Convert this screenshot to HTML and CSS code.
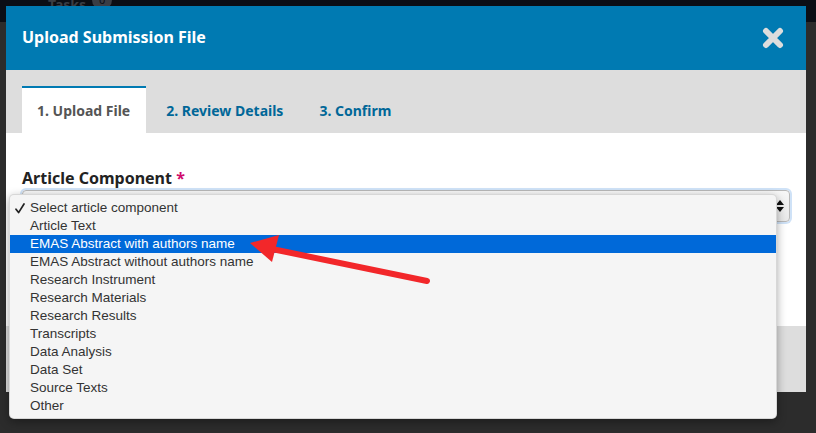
FILE: index.html
```html
<!DOCTYPE html>
<html lang="en">
<head>
<meta charset="utf-8">
<title>Upload Submission File</title>
<link rel="stylesheet" href="styles.css">
</head>
<body>
<div class="page">
  <header class="topbar">
    <span class="tasks">Tasks</span>
    <span class="tasks-badge">0</span>
  </header>
  <div class="page-body"></div>
</div>

<div class="modal" role="dialog" aria-label="Upload Submission File">
  <div class="modal-header">
    <h2 class="modal-title">Upload Submission File</h2>
    <button class="modal-close" aria-label="Close">
      <svg width="22" height="22" viewBox="0 0 22 22">
        <path d="M4 4 L18 18 M18 4 L4 18" stroke="#dddddd" stroke-width="6" stroke-linecap="round" fill="none"/>
      </svg>
    </button>
  </div>
  <nav class="modal-tabs">
    <a class="tab tab-active">1. Upload File</a>
    <a class="tab">2. Review Details</a>
    <a class="tab">3. Confirm</a>
  </nav>
  <div class="modal-body">
    <label class="field-label">Article Component <span class="req">*</span></label>
    <div class="select-box">
      <span class="select-arrows">
        <svg width="8" height="12" viewBox="0 0 8 12"><path d="M4 0 L8 5 L0 5 Z M0 7 L8 7 L4 12 Z" fill="#111"/></svg>
      </span>
    </div>
  </div>
  <div class="modal-footer"></div>
</div>

<ul class="option-list">
  <li class="option option-checked">
    <svg class="check" width="10" height="11" viewBox="0 0 10 11"><path d="M1 6.2 L3.6 9.6 L9 1" stroke="#222" stroke-width="1.7" fill="none" stroke-linecap="round" stroke-linejoin="round"/></svg>Select article component</li>
  <li class="option">Article Text</li>
  <li class="option option-hover">EMAS Abstract with authors name</li>
  <li class="option">EMAS Abstract without authors name</li>
  <li class="option">Research Instrument</li>
  <li class="option">Research Materials</li>
  <li class="option">Research Results</li>
  <li class="option">Transcripts</li>
  <li class="option">Data Analysis</li>
  <li class="option">Data Set</li>
  <li class="option">Source Texts</li>
  <li class="option">Other</li>
</ul>

<svg class="pointer" width="816" height="433" viewBox="0 0 816 433">
  <line x1="272" y1="249" x2="427" y2="281" stroke="#f2272a" stroke-width="6" stroke-linecap="round"/>
  <polygon points="250,243 279,235 272,262" fill="#f2272a"/>
</svg>
</body>
</html>
```

FILE: styles.css
```css
* { box-sizing: border-box; }

html, body {
  margin: 0;
  padding: 0;
}

body {
  width: 816px;
  height: 433px;
  overflow: hidden;
  position: relative;
  background: #2d2d2d;
  font-family: "Noto Sans", "Liberation Sans", sans-serif;
}

/* dimmed application behind the dialog */
.page {
  display: flex;
  flex-direction: column;
  height: 100%;
}

.topbar {
  height: 22px;
  background: #0b0e15;
  display: flex;
  align-items: flex-start;
  gap: 6px;
  padding-left: 48px;
}

.tasks {
  color: #3a3d44;
  font-size: 14px;
  font-weight: bold;
  line-height: 10px;
}

.tasks-badge {
  width: 20px;
  height: 20px;
  margin-top: -10px;
  border-radius: 50%;
  background: #3a3d44;
  color: #0b0e15;
  font-size: 11px;
  text-align: center;
  line-height: 20px;
}

.page-body {
  flex: 1;
  background: #2c2c2c;
}

/* dialog */
.modal {
  position: absolute;
  left: 6px;
  top: 6px;
  width: 800px;
  height: 386px;
  display: flex;
  flex-direction: column;
  background: #fff;
}

.modal-header {
  height: 64px;
  flex: none;
  background: #007ab2;
  display: flex;
  align-items: center;
  justify-content: space-between;
  padding: 0 22px 0 16px;
}

.modal-title {
  margin: 0;
  color: #fff;
  font-size: 16px;
  font-weight: bold;
  padding-bottom: 2px;
}

.modal-close {
  background: none;
  border: 0;
  padding: 0;
  width: 22px;
  height: 22px;
  display: flex;
}

.modal-tabs {
  height: 63px;
  flex: none;
  background: #dddddd;
  display: flex;
  align-items: flex-end;
  gap: 5px;
  padding: 0 16px;
}

.tab {
  height: 47px;
  display: flex;
  align-items: center;
  padding: 0 16px 0 15px;
  font-size: 14px;
  font-weight: bold;
  color: #006798;
  border-top: 2px solid transparent;
}

.tab-active {
  background: #fff;
  color: #555;
  border-top-color: #007ab2;
}

.modal-body {
  flex: 1;
  padding: 35px 16px 0;
}

.field-label {
  display: block;
  font-size: 16px;
  font-weight: bold;
  line-height: 20px;
  color: #222;
}

.req {
  color: #d00a6c;
}

.select-box {
  margin-top: 2px;
  height: 32px;
  border: 1px solid #b8b8b8;
  border-radius: 4px;
  background: linear-gradient(#f7f7f7, #e8e8e8);
  box-shadow: 0 0 0 2px #cfe2f7;
  display: flex;
  justify-content: flex-end;
  align-items: center;
  padding-right: 5px;
}

.select-arrows {
  display: flex;
}

.modal-footer {
  height: 66px;
  flex: none;
  background: #dddddd;
}

/* open native option list */
.option-list {
  position: absolute;
  left: 9px;
  top: 194px;
  width: 768px;
  height: 225px;
  margin: 0;
  padding: 4px 0 4px;
  list-style: none;
  background: #f5f5f5;
  border-radius: 5px;
  border: 1px solid rgba(0, 0, 0, 0.12);
  box-shadow: 0 3px 10px rgba(0, 0, 0, 0.35);
  font-family: "Liberation Sans", "Noto Sans", sans-serif;
  font-size: 13.5px;
  color: #333;
}

.option {
  position: relative;
  height: 18px;
  line-height: 18px;
  padding-left: 20px;
}

.check {
  position: absolute;
  left: 5px;
  top: 4px;
}

.option-hover {
  background: #0069d9;
  color: #fff;
}

.pointer {
  position: absolute;
  left: 0;
  top: 0;
  pointer-events: none;
}
```
